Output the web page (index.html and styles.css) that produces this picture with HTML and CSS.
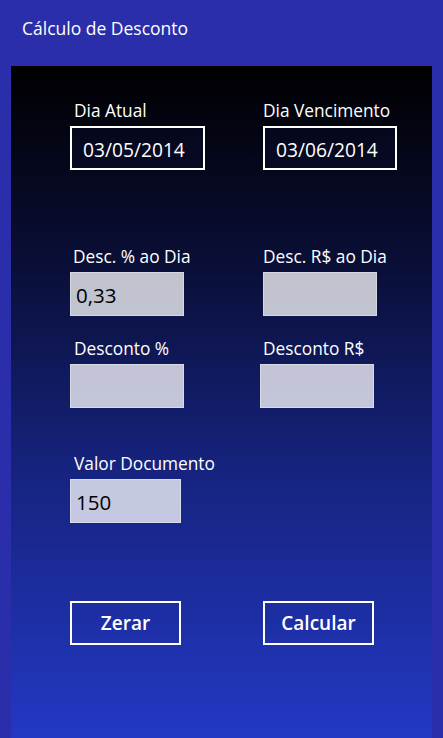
FILE: index.html
```html
<!DOCTYPE html>
<html>
	<head>
		<title>Cálculo de Desconto</title>
		<meta charset="utf-8" />
		<link rel="stylesheet" href="styles.css">
	</head>
<body>
	<div id="header">Cálculo de Desconto</div>
	<div id="panel">
		<div class="row row-dates">
			<div class="field">
				<label>Dia Atual</label>
				<input type="text" class="date" id="diaatual" value="03/05/2014">
			</div>
			<div class="field right">
				<label>Dia Vencimento</label>
				<input type="text" class="date narrow" id="diavenc" value="03/06/2014">
			</div>
		</div>
		<div class="row row-descdia">
			<div class="field">
				<label>Desc. % ao Dia</label>
				<input type="text" class="box" id="descpct" value="0,33">
			</div>
			<div class="field right">
				<label>Desc. R$ ao Dia</label>
				<input type="text" class="box" id="descrs" value="">
			</div>
		</div>
		<div class="row row-desc">
			<div class="field">
				<label>Desconto %</label>
				<input type="text" class="box" id="desctotpct" value="">
			</div>
			<div class="field right shift">
				<label>Desconto R$</label>
				<input type="text" class="box" id="desctotrs" value="">
			</div>
		</div>
		<div class="row row-valor">
			<div class="field">
				<label>Valor Documento</label>
				<input type="text" class="box valor" id="valor" value="150">
			</div>
		</div>
		<div class="row row-buttons">
			<div class="field">
				<button onclick="zerar()">Zerar</button>
			</div>
			<div class="field">
				<button onclick="calcular()">Calcular</button>
			</div>
		</div>
	</div>
<script type="text/javascript">
function zerar() {
	var ids = ["descpct","descrs","desctotpct","desctotrs","valor"];
	for (var i = 0; i < ids.length; i++) {
		document.getElementById(ids[i]).value = '';
	};
};
function calcular() {
	// nada por enquanto
};
</script>
</body>
</html>
```

FILE: styles.css
```css
:root {
	font-family: "Open Sans", "Noto Sans", sans-serif;
	background-color: #2a2eaa;
}
body {
	margin: 0;
	height: 738px;
	overflow: hidden;
	background-color: #2a2eaa;
	color: white;
}
div#header {
	height: 66px;
	box-sizing: border-box;
	padding: 16px 0 0 22px;
	font-size: 17.5px;
	line-height: 24px;
}
div#panel {
	margin: 0 11px;
	height: 672px;
	box-sizing: border-box;
	padding: 33px 0 0 59px;
	background: linear-gradient(to bottom, #000000 0%, #0a0f38 30%, #16237e 60%, #2338c4 100%);
}
.row {
	display: grid;
	grid-template-columns: 193px 1fr;
}
.row-descdia {
	margin-top: 75px;
}
.row-desc {
	margin-top: 21px;
}
.row-valor {
	margin-top: 44px;
}
.row-buttons {
	margin-top: 78px;
}
.field {
	display: flex;
	flex-direction: column;
	align-items: flex-start;
	gap: 4px;
}
label {
	font-size: 17.3px;
	line-height: 23px;
	padding-left: 4px;
}
.row-descdia label {
	padding-left: 3px;
}
.field.right label {
	padding-left: 0;
}
.field.shift {
	margin-left: -3px;
}
.field.shift label {
	padding-left: 3px;
}
input {
	font-family: inherit;
	box-sizing: border-box;
	margin: 0;
	outline: none;
}
input.date {
	width: 135px;
	height: 44px;
	border: solid 2px white;
	background-color: rgba(20, 24, 90, 0.15);
	color: white;
	font-size: 19.2px;
	padding: 2px 0 0 11px;
}
input.date.narrow {
	width: 134px;
}
input.box {
	width: 114px;
	height: 44px;
	border: solid 1px rgba(255, 255, 255, 0.35);
	background-color: rgba(255, 255, 255, 0.75);
	color: black;
	font-size: 20.5px;
	padding: 2px 0 0 5px;
}
input.box.valor {
	width: 111px;
}
button {
	width: 111px;
	height: 44px;
	box-sizing: border-box;
	border: solid 2px white;
	background-color: transparent;
	color: white;
	font-family: inherit;
	font-weight: 600;
	font-size: 19px;
	padding: 0;
}
```
